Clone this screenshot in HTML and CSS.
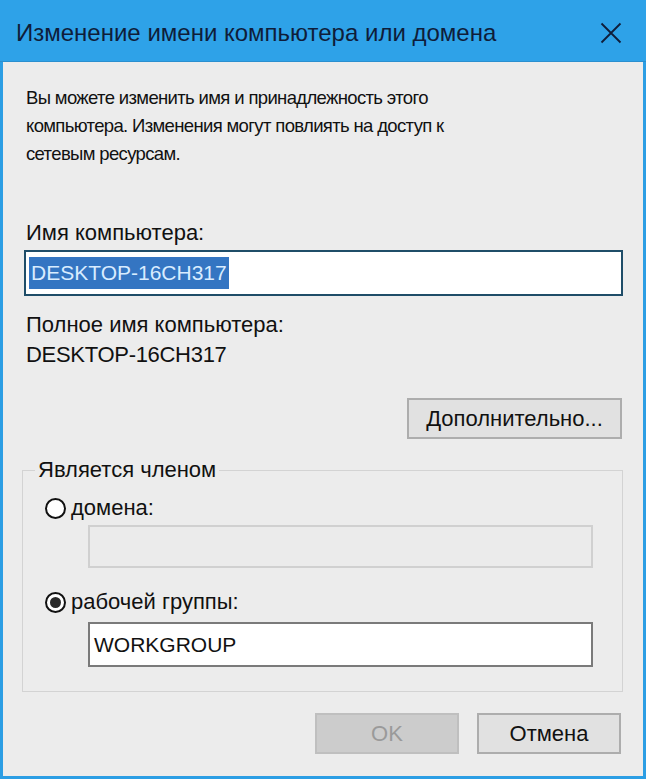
FILE: index.html
```html
<!DOCTYPE html>
<html lang="ru">
<head>
  <meta charset="UTF-8">
  <meta name="viewport" content="width=device-width, initial-scale=1.0">
  <title>Изменение имени компьютера или домена</title>
  <link rel="stylesheet" href="styles.css">
</head>
<body>
  <div class="window">
    <header class="titlebar">
      <h1>Изменение имени компьютера или домена</h1>
      <button class="close" aria-label="Закрыть">
        <svg width="22" height="22" viewBox="0 0 22 22">
          <path d="M1.5 1.5 L20.5 20.5 M20.5 1.5 L1.5 20.5" stroke="#0f1d3a" stroke-width="1.8" fill="none"/>
        </svg>
      </button>
    </header>

    <main class="content">
      <p class="intro">Вы можете изменить имя и принадлежность этого<br>компьютера. Изменения могут повлиять на доступ к<br>сетевым ресурсам.</p>

      <label class="label" for="compName">Имя компьютера:</label>
      <div class="field field-name" id="compName"><span class="selected">DESKTOP-16CH317</span></div>

      <div class="label full-label">Полное имя компьютера:</div>
      <div class="label full-name">DESKTOP-16CH317</div>

      <div class="more-row">
        <button class="btn btn-more">Дополнительно...</button>
      </div>

      <fieldset class="member">
        <legend>Является членом</legend>
        <div class="radio-row">
          <span class="radio"></span>
          <span>домена:</span>
        </div>
        <div class="field field-sub disabled"></div>

        <div class="radio-row second">
          <span class="radio checked"></span>
          <span>рабочей группы:</span>
        </div>
        <div class="field field-sub">WORKGROUP</div>
      </fieldset>

      <div class="actions">
        <button class="btn btn-ok" disabled>OK</button>
        <button class="btn btn-cancel">Отмена</button>
      </div>
    </main>
  </div>
</body>
</html>
```

FILE: styles.css
```css
body {
  margin: 0;
  padding: 0;
  background: #ffffff;
  font-family: "Liberation Sans", Arial, sans-serif;
  color: #111111;
}
.window {
  width: 646px;
  height: 779px;
  box-sizing: border-box;
  border: 3px solid #2c9ee4;
  border-top: none;
  background: #ececec;
  display: flex;
  flex-direction: column;
}
.titlebar {
  flex-shrink: 0;
  height: 62px;
  margin: 0 -3px;
  background: #2ea2e8;
  display: flex;
  align-items: center;
  justify-content: space-between;
  padding: 0 24px 0 16px;
  border-bottom: 1px solid #2a8fcf;
  box-sizing: border-box;
}
.titlebar h1 {
  margin: 0;
  font-size: 24px;
  font-weight: normal;
  color: #0f1d3a;
  position: relative;
  top: 2px;
}
.close {
  background: none;
  border: none;
  padding: 0;
  width: 22px;
  height: 22px;
  position: relative;
  top: 2px;
}
.content {
  padding: 22px 20px 0 21px;
  font-size: 22px;
}
.intro {
  margin: 0 0 50px 2px;
  font-size: 18.5px;
  letter-spacing: -0.65px;
  line-height: 28px;
}
.label {
  display: block;
  line-height: 30px;
  margin-left: 2px;
}
.full-name {
  letter-spacing: -0.3px;
}
.field {
  height: 46px;
  box-sizing: border-box;
  border: 2px solid #1f4d68;
  background: #ffffff;
  margin-top: 2px;
  padding: 0 0 0 3px;
  display: flex;
  align-items: center;
  font-size: 21px;
}
.selected {
  background: #3475c2;
  color: #d8ecff;
  padding: 0 2px;
  line-height: 32px;
}
.full-label {
  margin-top: 14px;
}
.more-row {
  display: flex;
  justify-content: flex-end;
  margin-top: 28px;
}
.btn {
  font-family: inherit;
  font-size: 22px;
  height: 41px;
  box-sizing: border-box;
  background: #e1e1e1;
  border: 2px solid #adadad;
  color: #111111;
  padding: 0;
}
.btn-more {
  width: 215px;
  margin-right: 1px;
}
.member {
  margin: 16px 0 0 -2px;
  border: 1px solid #d3d3d3;
  padding: 8px 29px 24px 22px;
}
.member legend {
  padding: 0 3px;
  margin-left: -10px;
  line-height: 30px;
}
.radio-row {
  display: flex;
  align-items: center;
  gap: 5px;
  height: 30px;
}
.radio-row.second {
  margin-top: 19px;
}
.radio {
  width: 21px;
  height: 21px;
  box-sizing: border-box;
  border: 2px solid #111111;
  border-radius: 50%;
  background: #ffffff;
  display: flex;
  align-items: center;
  justify-content: center;
}
.radio.checked::after {
  content: "";
  width: 11px;
  height: 11px;
  border-radius: 50%;
  background: #2a2a2a;
}
.field-sub {
  margin: 5px 0 0 43px;
  height: 45px;
  border: 2px solid #7a7a7a;
  padding-left: 4px;
}
.field-sub.disabled {
  background: #ebebeb;
  border-color: #d0d0d0;
  margin-top: 2px;
  height: 43px;
}
.actions {
  display: flex;
  justify-content: flex-end;
  gap: 18px;
  margin-top: 21px;
}
.btn-ok {
  width: 144px;
  background: #cccccc;
  border-color: #bfbfbf;
  color: #9a9a9a;
}
.btn-cancel {
  width: 144px;
  margin-right: 2px;
}
```
